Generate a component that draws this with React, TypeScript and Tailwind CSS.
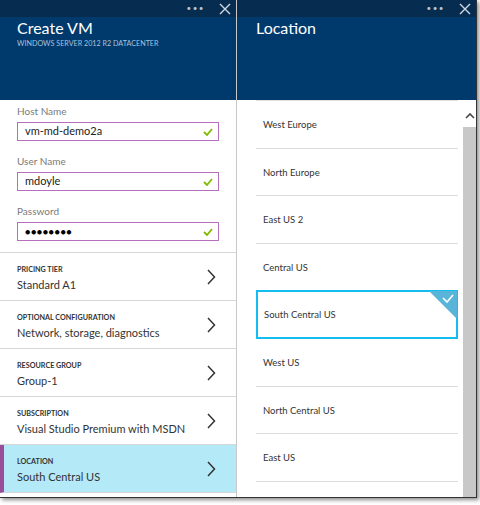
import React from 'react';

const font = { fontFamily: 'Lato, "Noto Sans", sans-serif' };

function Chevron() {
  return (
    <svg width="10" height="16" viewBox="0 0 10 16" className="shrink-0 self-center">
      <polyline points="2,1 8.5,8 2,15" fill="none" stroke="#333" strokeWidth="1.5" />
    </svg>
  );
}

function Check() {
  return (
    <svg width="10" height="8" viewBox="0 0 10 8" className="shrink-0">
      <polyline points="1,4 4,7 9,1" fill="none" stroke="#7fba00" strokeWidth="1.8" />
    </svg>
  );
}

function BladeBar() {
  return (
    <div className="h-[17px] bg-[#062c50] flex items-center justify-end gap-[14px] pr-[5px]">
      <span className="text-[#b7c6d6] text-[8px] tracking-[1.5px] leading-none -mt-[2px]">•••</span>
      <svg width="12" height="12" viewBox="0 0 12 12">
        <path d="M1 1 L11 11 M11 1 L1 11" stroke="#cfd9e4" strokeWidth="1.4" />
      </svg>
    </div>
  );
}

function Field({ label, value, secret }: { label: string; value: string; secret?: boolean }) {
  return (
    <div className="flex flex-col">
      <div className="text-[10px] text-[#7a7a7a] leading-[12px] mb-[5px]">{label}</div>
      <div className="h-[19px] border border-[#b56fbd] flex items-center justify-between pl-[7px] pr-[5px]">
        <span className={secret ? 'text-[9px] tracking-[0.5px] text-black' : 'text-[11px] text-[#222]'}>
          {value}
        </span>
        <Check />
      </div>
    </div>
  );
}

function Section({ label, value, active }: { label: string; value: string; active?: boolean }) {
  return (
    <div
      className={
        'h-[48px] shrink-0 flex justify-between pr-[20px] border-b border-[#d6d6d6] ' +
        (active ? 'bg-[#b4e9f8] border-l-[4px] border-l-[#9a4d98] pl-[13px]' : 'pl-[17px]')
      }
    >
      <div className="flex flex-col pt-[12px]">
        <span className="text-[7.2px] font-bold text-[#333] leading-[10px]">{label}</span>
        <span className="text-[11px] text-[#333] leading-[18px] mt-[1px]">{value}</span>
      </div>
      <Chevron />
    </div>
  );
}

const regions = [
  'West Europe',
  'North Europe',
  'East US 2',
  'Central US',
  'South Central US',
  'West US',
  'North Central US',
  'East US',
];

export default function App() {
  return (
    <div className="w-[480px] h-[505px] bg-white overflow-hidden" style={font}>
      <div className="w-[477px] h-[498px] flex border-r border-b border-[#333] shadow-[2px_2px_4px_rgba(0,0,0,0.45)]">
        {/* left blade */}
        <div className="w-[237px] flex flex-col border-r border-[#c8c8c8] overflow-hidden">
          <BladeBar />
          <div className="h-[83px] shrink-0 bg-[#003a6d] px-[17px]">
            <div className="text-white text-[16px] leading-[22px]">Create VM</div>
            <div className="text-[#a9c2dc] text-[7.2px] leading-[10px]">
              WINDOWS SERVER 2012 R2 DATACENTER
            </div>
          </div>
          <div className="flex flex-col gap-[14px] px-[17px] pt-[5px] pb-[11px] border-b border-[#d6d6d6]">
            <Field label="Host Name" value="vm-md-demo2a" />
            <Field label="User Name" value="mdoyle" />
            <Field label="Password" value="●●●●●●●●" secret />
          </div>
          <Section label="PRICING TIER" value="Standard A1" />
          <Section label="OPTIONAL CONFIGURATION" value="Network, storage, diagnostics" />
          <Section label="RESOURCE GROUP" value="Group-1" />
          <Section label="SUBSCRIPTION" value="Visual Studio Premium with MSDN" />
          <Section label="LOCATION" value="South Central US" active />
        </div>
        {/* right blade */}
        <div className="flex-1 flex flex-col">
          <BladeBar />
          <div className="h-[83px] shrink-0 bg-[#003a6d] px-[19px]">
            <div className="text-white text-[16px] leading-[22px]">Location</div>
          </div>
          <div className="flex-1 flex overflow-hidden">
            <div className="flex-1 flex flex-col pl-[19px] pr-[5px]">
              <div className="h-[1px] shrink-0 bg-[#e0e0e0]" />
              {regions.map((r) => {
                const sel = r === 'South Central US';
                return sel ? (
                  <div
                    key={r}
                    className="relative h-[49px] shrink-0 -mt-[1px] border-2 border-[#14bdf0] flex items-center pl-[6px] pt-[1px] text-[9.5px] text-[#333]"
                  >
                    {r}
                    <svg width="28" height="28" viewBox="0 0 28 28" className="absolute -top-[1px] -right-[1px]">
                      <polygon points="0,0 28,0 28,28" fill="#59b4d9" />
                      <polyline points="14,7 18,11 24,4" fill="none" stroke="white" strokeWidth="1.7" />
                    </svg>
                  </div>
                ) : (
                  <div
                    key={r}
                    className="h-[47.5px] shrink-0 flex items-center pl-[7px] pt-[2px] text-[9.5px] text-[#333] border-b border-[#dcdcdc]"
                  >
                    {r}
                  </div>
                );
              })}
            </div>
            <div className="w-[13px] flex flex-col">
              <div className="h-[27px] bg-white flex items-start justify-center pt-[13px]">
                <svg width="10" height="6" viewBox="0 0 10 6">
                  <polyline points="1,5 5,1 9,5" fill="none" stroke="#444" strokeWidth="1.6" />
                </svg>
              </div>
              <div className="flex-1 bg-[#c8c8c8]" />
            </div>
          </div>
        </div>
      </div>
    </div>
  );
}
